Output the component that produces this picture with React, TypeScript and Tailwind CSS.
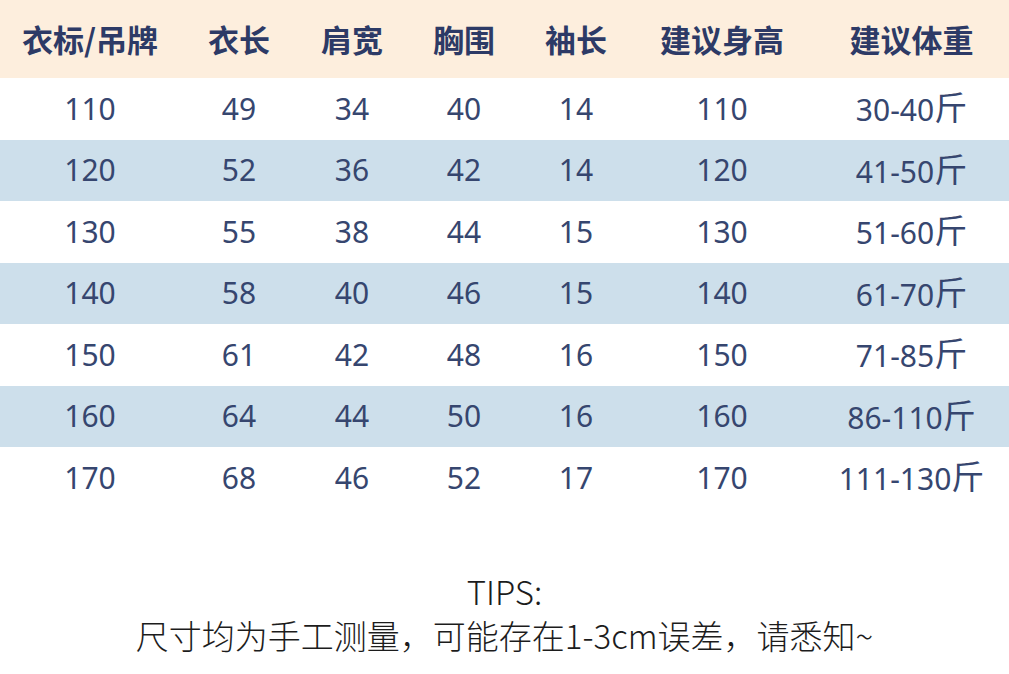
import React from "react";

const headers = ["衣标/吊牌", "衣长", "肩宽", "胸围", "袖长", "建议身高", "建议体重"];
const rows = [
  ["110", "49", "34", "40", "14", "110", "30-40斤"],
  ["120", "52", "36", "42", "14", "120", "41-50斤"],
  ["130", "55", "38", "44", "15", "130", "51-60斤"],
  ["140", "58", "40", "46", "15", "140", "61-70斤"],
  ["150", "61", "42", "48", "16", "150", "71-85斤"],
  ["160", "64", "44", "50", "16", "160", "86-110斤"],
  ["170", "68", "46", "52", "17", "170", "111-130斤"],
];

const grid = "grid grid-cols-[180px_118px_108px_116px_108px_184px_195px] items-center";

export default function App() {
  return (
    <div className="w-[1009px] h-[674px] bg-white overflow-hidden">
      <div className={`${grid} h-[78px] bg-[#fdeedd]`}>
        {headers.map((h) => (
          <div
            key={h}
            className="text-center text-[31px] font-bold text-[#2d3a66] leading-none pb-[2px]"
            style={{ fontFamily: '"Noto Sans CJK SC", sans-serif' }}
          >
            {h}
          </div>
        ))}
      </div>
      {rows.map((r, i) => (
        <div key={i} className={`${grid} h-[61.5px] ${i % 2 === 1 ? "bg-[#cddfeb]" : "bg-white"}`}>
          {r.map((c, j) => {
            const m = c.match(/^(.*?)(斤?)$/);
            return (
              <div
                key={j}
                className="text-center text-[30px] text-[#36466f] leading-none"
                style={{ fontFamily: '"Noto Sans", "Noto Sans CJK SC", sans-serif' }}
              >
                {m ? m[1] : c}
                {m && m[2] ? <span className="text-[33px] relative top-[-1px]">{m[2]}</span> : null}
              </div>
            );
          })}
        </div>
      ))}
      <div
        className="flex flex-col items-center mt-[60px] text-[#1c1c1c] text-[33px] font-light leading-[44px]"
        style={{ fontFamily: '"Noto Sans CJK SC", sans-serif' }}
      >
        <div>TIPS:</div>
        <div>尺寸均为手工测量，可能存在1-3cm误差，请悉知~</div>
      </div>
    </div>
  );
}
